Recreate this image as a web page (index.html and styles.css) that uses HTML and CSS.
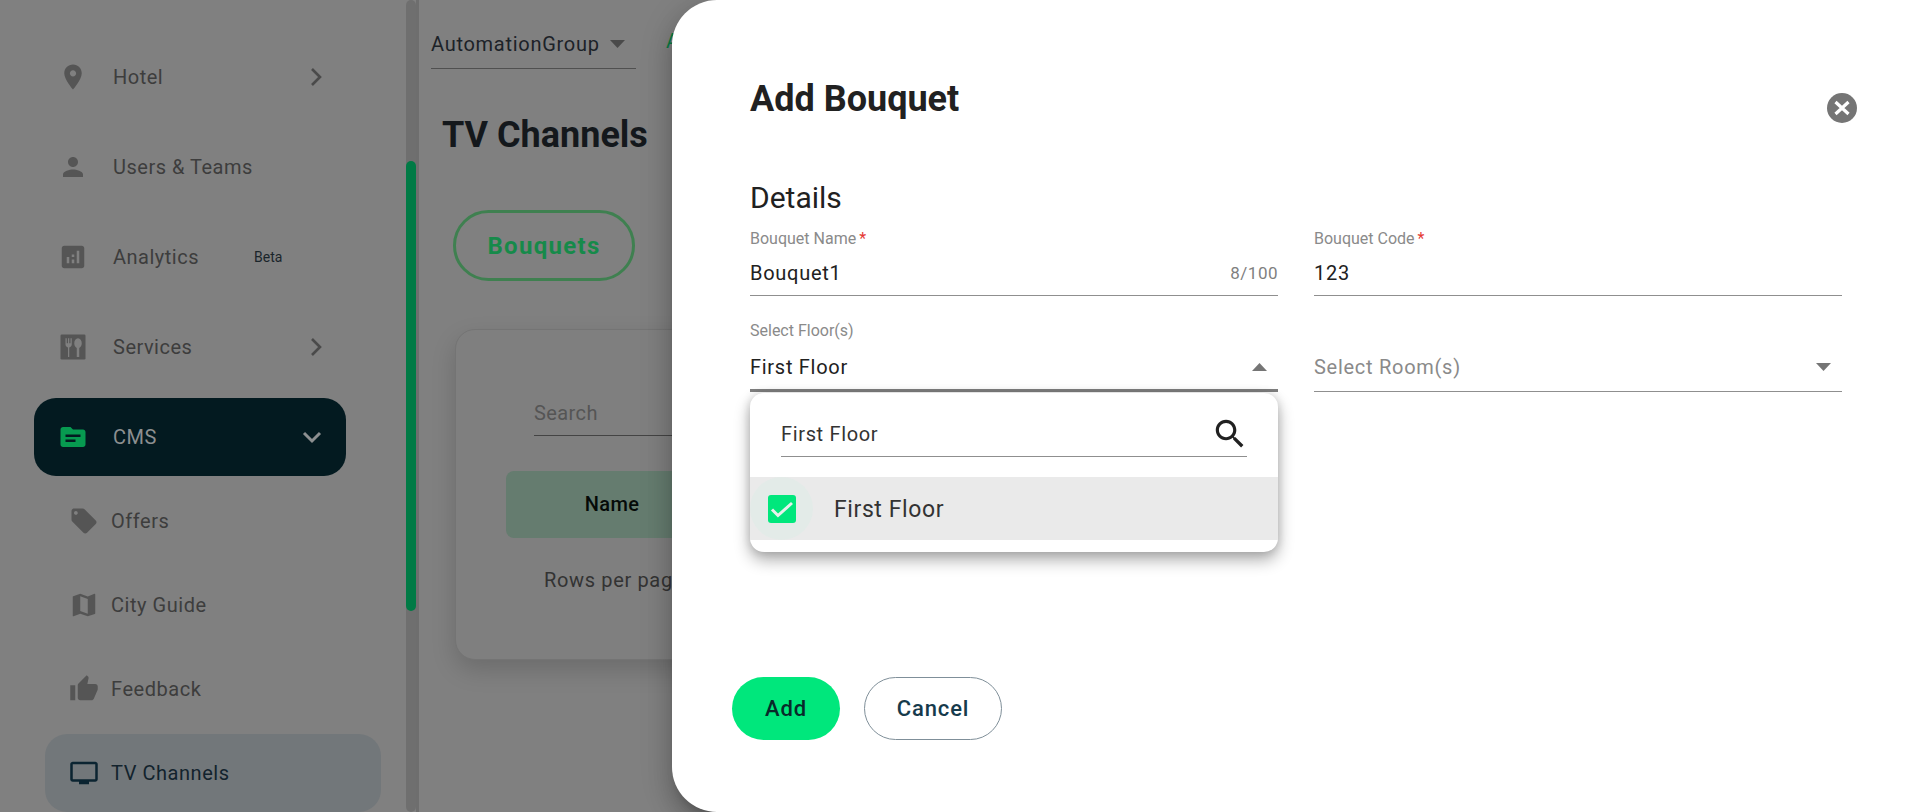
FILE: index.html
```html
<!DOCTYPE html>
<html lang="en">
<head>
<meta charset="utf-8">
<title>TV Channels</title>
<link rel="stylesheet" href="styles.css">
</head>
<body>
<div class="page">
  <aside class="sidebar">
    <nav class="nav">
      <div class="row"><svg class="icon" viewBox="0 0 24 24"><path d="M12 2C8.13 2 5 5.13 5 9c0 5.25 7 13 7 13s7-7.75 7-13c0-3.87-3.13-7-7-7zm0 9.5c-1.38 0-2.5-1.12-2.5-2.5s1.12-2.5 2.5-2.5 2.5 1.12 2.5 2.5-1.12 2.5-2.5 2.5z"/></svg><span>Hotel</span><svg class="chev" viewBox="0 0 24 24"><path d="M8 4l8 8-8 8"/></svg></div>
      <div class="row"><svg class="icon" viewBox="0 0 24 24"><path d="M12 12c2.21 0 4-1.79 4-4s-1.79-4-4-4-4 1.79-4 4 1.79 4 4 4zm0 2c-2.67 0-8 1.34-8 4v2h16v-2c0-2.66-5.33-4-8-4z"/></svg><span>Users &amp; Teams</span></div>
      <div class="row"><svg class="icon" viewBox="0 0 24 24"><path d="M19 3H5c-1.1 0-2 .9-2 2v14c0 1.1.9 2 2 2h14c1.1 0 2-.9 2-2V5c0-1.1-.9-2-2-2zM9 17H7v-5h2v5zm4 0h-2v-3h2v3zm0-5h-2v-2h2v2zm4 5h-2V7h2v10z"/></svg><span>Analytics</span><span class="beta">Beta</span></div>
      <div class="row"><svg class="icon" viewBox="0 0 24 24"><path d="M3 2h18a1 1 0 0 1 1 1v18a1 1 0 0 1-1 1H3a1 1 0 0 1-1-1V3a1 1 0 0 1 1-1z"/><path class="cut" d="M6 5h1v4h1V5h1v4h1V5h1v5c0 1.2-.8 2-2 2.300V20H8v-7.700C6.800 12 6 11.200 6 10zM16 5c1.700 0 3 1.800 3 4 0 1.900-1 3.300-2 3.700V20h-2v-7.300c-1-.4-2-1.800-2-3.700 0-2.200 1.300-4 3-4z"/></svg><span>Services</span><svg class="chev" viewBox="0 0 24 24"><path d="M8 4l8 8-8 8"/></svg></div>
      <div class="row row-active"><svg class="icon icon-green" viewBox="0 0 24 24"><path d="M20 6h-8l-2-2H4c-1.100 0-1.990.9-1.990 2L2 18c0 1.100.9 2 2 2h16c1.100 0 2-.9 2-2V8c0-1.100-.9-2-2-2zm-6 10H6v-2h8v2zm4-4H6v-2h12v2z"/></svg><span>CMS</span><svg class="chev chev-down" viewBox="0 0 24 24"><path d="M4 8l8 8 8-8"/></svg></div>
      <div class="sub-list">
        <div class="sub"><svg class="icon" viewBox="0 0 24 24"><path d="M21.410 11.580l-9-9C12.050 2.220 11.550 2 11 2H4c-1.100 0-2 .9-2 2v7c0 .55.22 1.050.59 1.420l9 9c.36.36.86.58 1.410.58.55 0 1.050-.22 1.410-.59l7-7c.37-.36.59-.86.59-1.410 0-.55-.23-1.060-.59-1.420zM5.500 7C4.670 7 4 6.330 4 5.500S4.670 4 5.500 4 7 4.670 7 5.500 6.330 7 5.500 7z"/></svg><span>Offers</span></div>
        <div class="sub"><svg class="icon" viewBox="0 0 24 24"><path d="M20.500 3l-.16.03L15 5.100 9 3 3.360 4.900c-.21.07-.36.25-.36.48V20.500c0 .28.22.5.5.5l.16-.03L9 18.900l6 2.100 5.640-1.900c.21-.07.36-.25.36-.48V3.500c0-.28-.22-.5-.5-.5zM15 19l-6-2.110V5l6 2.110V19z"/></svg><span>City Guide</span></div>
        <div class="sub"><svg class="icon" viewBox="0 0 24 24"><path d="M1 21h4V9H1v12zm22-11c0-1.100-.9-2-2-2h-6.310l.95-4.570.03-.32c0-.41-.17-.79-.44-1.060L14.170 1 7.590 7.590C7.220 7.950 7 8.450 7 9v10c0 1.100.9 2 2 2h9c.83 0 1.540-.5 1.840-1.220l3.020-7.050c.09-.23.14-.47.14-.73v-2z"/></svg><span>Feedback</span></div>
        <div class="sub sub-active"><svg class="icon icon-dark" viewBox="0 0 24 24"><path d="M21 3H3c-1.100 0-2 .9-2 2v12c0 1.100.9 2 2 2h5v2h8v-2h5c1.100 0 1.990-.9 1.990-2L23 5c0-1.100-.9-2-2-2zm0 14H3V5h18v12z"/></svg><span>TV Channels</span></div>
      </div>
    </nav>
    <div class="scrolltrack"><div class="scrollthumb"></div></div>
  </aside>

  <main class="main">
    <div class="topbar">
      <div class="group-select"><span>AutomationGroup</span><svg class="caret" viewBox="0 0 15 8"><path d="M0 0h15L7.500 8z"/></svg></div>
      <span class="group-next">Active</span>
    </div>
    <h1 class="page-title">TV Channels</h1>
    <div class="pill">Bouquets</div>
    <section class="card">
      <div class="search">Search</div>
      <div class="table-head"><div class="th">Name</div></div>
      <div class="rows">Rows per page</div>
    </section>
  </main>

  <div class="modal">
    <svg class="close" viewBox="0 0 30 30"><circle cx="15" cy="15" r="15"/><path d="M8.500 9l13 12M21.500 9l-13 12"/></svg>
    <h2 class="modal-title">Add Bouquet</h2>
    <h3 class="section-title">Details</h3>
    <div class="form">
      <div class="field">
        <label class="label">Bouquet Name<span class="req">*</span></label>
        <div class="control"><span class="value">Bouquet1</span><span class="count">8/100</span></div>
      </div>
      <div class="field">
        <label class="label">Bouquet Code<span class="req">*</span></label>
        <div class="control"><span class="value">123</span></div>
      </div>
      <div class="field field-open">
        <label class="label">Select Floor(s)</label>
        <div class="control control-select control-focus"><span class="value">First Floor</span><svg class="caret caret-light" viewBox="0 0 15 8"><path d="M0 8L7.500 0 15 8z"/></svg></div>
        <div class="dropdown">
          <div class="dd-search"><span class="dd-query">First Floor</span><svg class="dd-icon" viewBox="0 0 24 24"><path d="M15.500 14h-.79l-.28-.27C15.410 12.590 16 11.110 16 9.500 16 5.910 13.090 3 9.500 3S3 5.910 3 9.500 5.910 16 9.500 16c1.610 0 3.090-.59 4.230-1.570l.27.28v.79l5 4.990L20.490 19l-4.990-5zm-6 0C7.010 14 5 11.990 5 9.500S7.010 5 9.500 5 14 7.010 14 9.500 11.990 14 9.500 14z"/></svg></div>
          <div class="dd-row">
            <div class="ripple"><div class="checkbox"><svg viewBox="0 0 28 28"><path d="M4 14.500l6 6L24 8"/></svg></div></div>
            <span class="dd-text">First Floor</span>
          </div>
        </div>
      </div>
      <div class="field field-nolabel">
        <div class="control control-select"><span class="value value-muted">Select Room(s)</span><svg class="caret caret-light" viewBox="0 0 15 8"><path d="M0 0h15L7.500 8z"/></svg></div>
      </div>
    </div>
    <div class="actions">
      <button class="btn btn-add">Add</button>
      <button class="btn btn-cancel">Cancel</button>
    </div>
  </div>
</div>
</body>
</html>
```
FILE: styles.css
```css
* { box-sizing: border-box; }
html, body { margin: 0; padding: 0; height: 100%; }
body { font-family: Roboto, "Liberation Sans", sans-serif; background: #808080; overflow: hidden; }
.page { display: flex; width: 1920px; height: 812px; overflow: hidden; position: relative; background: #808080; }

/* sidebar */
.sidebar { width: 419px; flex: none; display: flex; border-right: 3px solid #6e6e6e; }
.nav { width: 406px; flex: none; padding: 38px 0 0 34px; }
.row { display: flex; align-items: center; width: 312px; height: 78px; margin-bottom: 12px; padding: 0 18px 0 24px; gap: 25px; border-radius: 22px; font-size: 20px; letter-spacing: .5px; color: #3d3d3d; }
.row:nth-child(5) { margin-bottom: 0; }
.row-active { background: #031a20; color: #8c8f90; }
.icon { width: 30px; height: 30px; flex: none; fill: #555; }
.icon .cut { fill: #808080; }
.icon-green { fill: #079a50; }
.icon-dark { fill: #0b2431; }
.chev { width: 24px; height: 24px; margin-left: auto; fill: none; stroke: #4a4a4a; stroke-width: 2.6; }
.chev-down { margin-right: 4px; stroke: #8c8f90; stroke-width: 3; }
.beta { font-size: 14px; letter-spacing: 0; color: #1a252b; margin-left: 30px; }
.sub-list { display: flex; flex-direction: column; gap: 6px; padding: 6px 0 0 11px; }
.sub { display: flex; align-items: center; width: 336px; height: 78px; padding-left: 24px; gap: 12px; border-radius: 22px; font-size: 20px; letter-spacing: .55px; color: #3d3d3d; }
.sub-active { background: #72777a; color: #12232d; }
.scrolltrack { width: 10px; height: 812px; flex: none; background: #6f6f6f; border-radius: 5px; }
.scrollthumb { width: 10px; height: 450px; margin-top: 161px; background: #007a45; border-radius: 5px; }

/* main */
.main { flex: 1; padding: 0 0 0 12px; min-width: 0; }
.topbar { display: flex; align-items: flex-start; gap: 30px; padding-top: 29px; }
.group-select { display: flex; align-items: center; justify-content: space-between; width: 205px; height: 40px; padding: 0 11px 10px 0; border-bottom: 1px solid #505050; font-size: 20px; letter-spacing: .72px; color: #1c2228; }
.group-next { font-size: 20px; color: #0a7a42; }
.caret { width: 15px; height: 8px; flex: none; fill: #4a4a4a; }
.caret-light { fill: #757575; }
.page-title { margin: 44px 0 0 11px; font-size: 36px; line-height: 44px; font-weight: 700; color: #14181c; }
.pill { width: 182px; height: 71px; margin: 53px 0 0 22px; display: flex; align-items: center; justify-content: center; border: 3px solid #3f8050; border-radius: 36px; font-size: 24px; font-weight: 700; letter-spacing: 1.3px; color: #168a4a; }
.card { width: 900px; height: 331px; margin: 48px 0 0 24px; padding: 69px 0 0 50px; background: #7f7f7f; border: 1px solid #747474; border-radius: 20px; box-shadow: 0 10px 24px rgba(0,0,0,.16); }
.search { margin-left: 28px; width: 400px; height: 37px; border-bottom: 1px solid #444; font-size: 20px; letter-spacing: .4px; line-height: 28px; color: #555; }
.table-head { margin-top: 35px; width: 700px; height: 67px; padding-bottom: 2px; background: #657c6f; border-radius: 8px; display: flex; align-items: center; }
.th { width: 212px; text-align: center; font-size: 20px; font-weight: 500; letter-spacing: .3px; color: #050a08; }
.rows { margin: 28px 0 0 38px; font-size: 20px; letter-spacing: .65px; line-height: 28px; color: #333; }

/* modal */
.modal { position: absolute; left: 672px; top: 0; right: 0; bottom: 0; display: flex; flex-direction: column; padding: 79px 78px 72px; background: #fff; border-radius: 45px 0 0 45px; box-shadow: 0 8px 10px -5px rgba(0,0,0,.2), 0 16px 24px 2px rgba(0,0,0,.14), 0 6px 30px 5px rgba(0,0,0,.12); }
.close { position: absolute; top: 93px; right: 63px; width: 30px; height: 30px; }
.close circle { fill: #757575; }
.close path { fill: none; stroke: #fff; stroke-width: 3.2; }
.modal-title { margin: 0; font-size: 36px; line-height: 40px; font-weight: 700; color: #212121; }
.section-title { margin: 61px 0 0; font-size: 30px; line-height: 36px; font-weight: 400; color: #212121; }
.form { display: grid; grid-template-columns: 528px 528px; column-gap: 36px; row-gap: 25px; margin-top: 13px; }
.field { position: relative; }
.field-nolabel { padding-top: 20px; }
.label { display: block; font-size: 16px; line-height: 20px; color: #8a8a8a; }
.req { color: #e53935; margin-left: 3px; }
.control { display: flex; align-items: center; justify-content: space-between; height: 47px; padding: 9px 0 7px; border-bottom: 1px solid #8f8f8f; }
.control-select { height: 51px; padding: 11px 11px 9px 0; }
.control-focus { border-bottom: 3px solid #7f7f7f; padding-bottom: 7px; }
.value { font-size: 20px; line-height: 30px; letter-spacing: .72px; color: #212121; }
.value-muted { color: #8a8a8a; }
.count { font-size: 17px; letter-spacing: .5px; color: #7f7f7f; }
.dropdown { position: absolute; top: calc(100% + 1px); left: 0; right: 0; height: 159px; padding-top: 25px; background: #fff; border-radius: 14px; box-shadow: 0 8px 16px rgba(0,0,0,.32), 0 0 10px rgba(0,0,0,.14); z-index: 2; }
.dd-search { display: flex; align-items: center; justify-content: space-between; height: 39px; margin: 0 31px; padding-bottom: 6px; border-bottom: 1px solid #8f8f8f; }
.dd-query { font-size: 20px; letter-spacing: .65px; color: #333; }
.dd-icon { width: 38px; height: 38px; flex: none; fill: #212121; margin-right: -2px; }
.dd-row { display: flex; align-items: center; height: 63px; margin-top: 20px; background: #eaeaea; }
.ripple { width: 63px; height: 63px; flex: none; border-radius: 50%; background: #e3ebe8; display: flex; align-items: center; justify-content: center; }
.checkbox { width: 28px; height: 28px; background: #00e77c; border-radius: 3px; }
.checkbox svg { display: block; width: 28px; height: 28px; fill: none; stroke: #e8f0ec; stroke-width: 3; }
.dd-text { margin-left: 21px; padding-top: 2px; font-size: 23px; letter-spacing: .6px; color: #333; }
.actions { display: flex; gap: 24px; margin: auto 0 0 -18px; }
.btn { height: 63px; border-radius: 32px; font-family: inherit; font-size: 22px; font-weight: 500; letter-spacing: .9px; padding: 0; }
.btn-add { width: 108px; background: #00e77c; border: none; color: #082a2a; }
.btn-cancel { width: 138px; background: #fff; border: 1px solid #7f8f99; color: #163a4c; }
```
